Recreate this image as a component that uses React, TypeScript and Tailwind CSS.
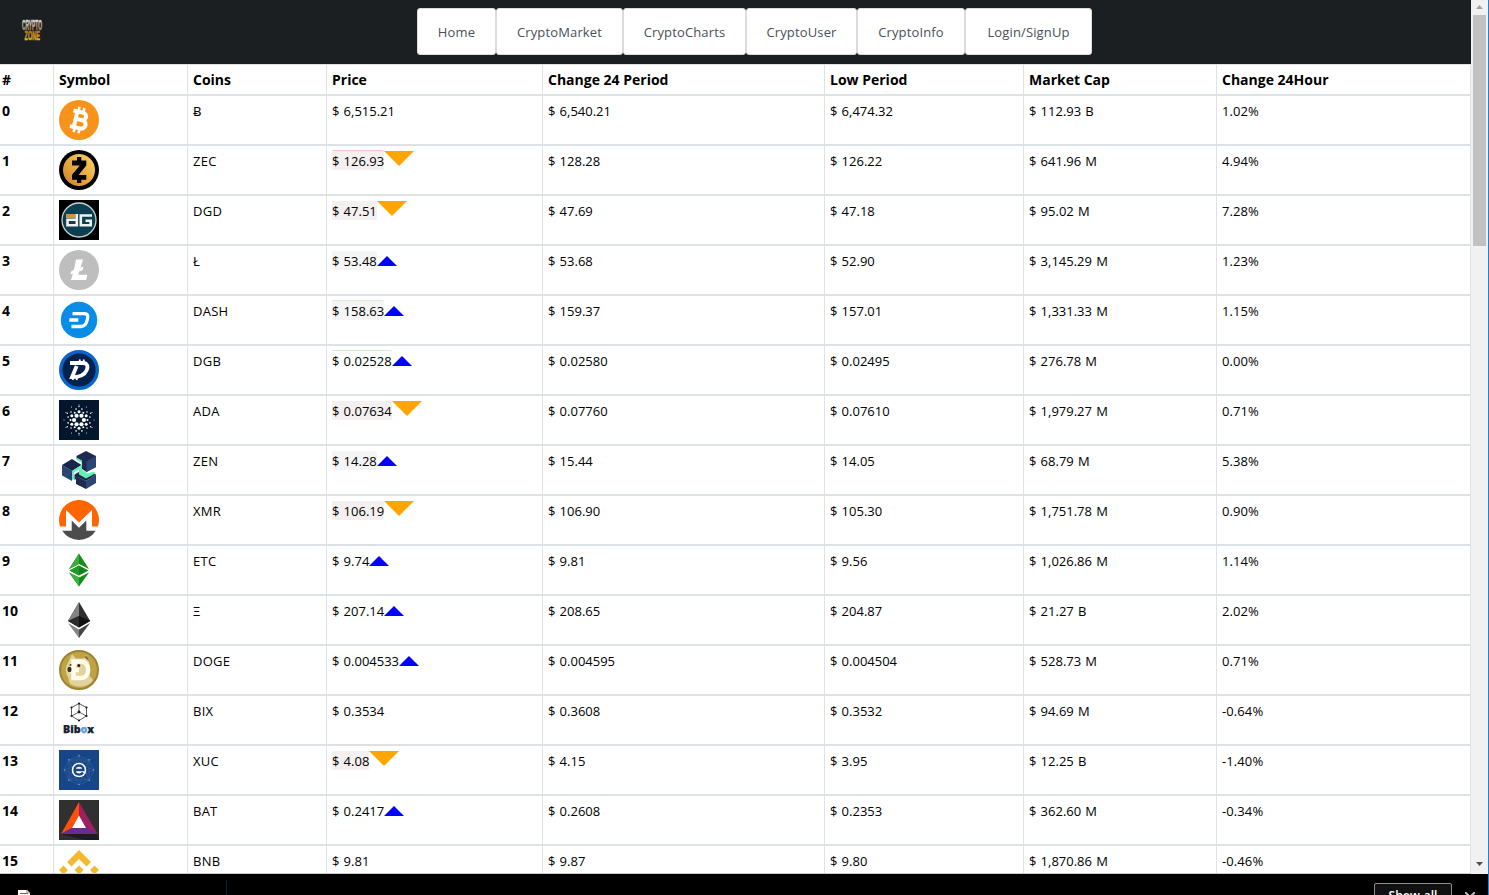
import React from 'react';

type Row = { coin: string; price: string; high: string; low: string; cap: string; change: string; dir?: 'up' | 'down'; tint?: string };

const rows: Row[] = [
  { coin: 'Ƀ', price: '$ 6,515.21', high: '$ 6,540.21', low: '$ 6,474.32', cap: '$ 112.93 B', change: '1.02%' },
  { coin: 'ZEC', price: '$ 126.93', high: '$ 128.28', low: '$ 126.22', cap: '$ 641.96 M', change: '4.94%', dir: 'down', tint: 'bg-[#f5f0f0] border-[#f5c6cb]' },
  { coin: 'DGD', price: '$ 47.51', high: '$ 47.69', low: '$ 47.18', cap: '$ 95.02 M', change: '7.28%', dir: 'down', tint: 'bg-[#f5f0f0] border-white' },
  { coin: 'Ł', price: '$ 53.48', high: '$ 53.68', low: '$ 52.90', cap: '$ 3,145.29 M', change: '1.23%', dir: 'up', tint: 'bg-[#f5f5f5] border-white' },
  { coin: 'DASH', price: '$ 158.63', high: '$ 159.37', low: '$ 157.01', cap: '$ 1,331.33 M', change: '1.15%', dir: 'up', tint: 'bg-[#f5f5f5] border-[#d8ead8]' },
  { coin: 'DGB', price: '$ 0.02528', high: '$ 0.02580', low: '$ 0.02495', cap: '$ 276.78 M', change: '0.00%', dir: 'up', tint: 'bg-[#fbfefb] border-[#d3e9d3]' },
  { coin: 'ADA', price: '$ 0.07634', high: '$ 0.07760', low: '$ 0.07610', cap: '$ 1,979.27 M', change: '0.71%', dir: 'down', tint: 'bg-[#f5f0f0] border-white' },
  { coin: 'ZEN', price: '$ 14.28', high: '$ 15.44', low: '$ 14.05', cap: '$ 68.79 M', change: '5.38%', dir: 'up', tint: 'bg-[#f5f5f5] border-white' },
  { coin: 'XMR', price: '$ 106.19', high: '$ 106.90', low: '$ 105.30', cap: '$ 1,751.78 M', change: '0.90%', dir: 'down', tint: 'bg-[#f5f0f0] border-white' },
  { coin: 'ETC', price: '$ 9.74', high: '$ 9.81', low: '$ 9.56', cap: '$ 1,026.86 M', change: '1.14%', dir: 'up', tint: 'bg-[#fbfefb] border-white' },
  { coin: 'Ξ', price: '$ 207.14', high: '$ 208.65', low: '$ 204.87', cap: '$ 21.27 B', change: '2.02%', dir: 'up', tint: 'bg-[#fbfefb] border-white' },
  { coin: 'DOGE', price: '$ 0.004533', high: '$ 0.004595', low: '$ 0.004504', cap: '$ 528.73 M', change: '0.71%', dir: 'up', tint: 'bg-[#fbfefb] border-white' },
  { coin: 'BIX', price: '$ 0.3534', high: '$ 0.3608', low: '$ 0.3532', cap: '$ 94.69 M', change: '-0.64%' },
  { coin: 'XUC', price: '$ 4.08', high: '$ 4.15', low: '$ 3.95', cap: '$ 12.25 B', change: '-1.40%', dir: 'down', tint: 'bg-[#f5f0f0] border-white' },
  { coin: 'BAT', price: '$ 0.2417', high: '$ 0.2608', low: '$ 0.2353', cap: '$ 362.60 M', change: '-0.34%', dir: 'up', tint: 'bg-[#fdfffd] border-white' },
  { coin: 'BNB', price: '$ 9.81', high: '$ 9.87', low: '$ 9.80', cap: '$ 1,870.86 M', change: '-0.46%' },
];

const ring = (n: number, r: number, s: number, off = 0) =>
  Array.from({ length: n }, (_, i) => {
    const a = ((i + off) * 2 * Math.PI) / n;
    return <circle key={`${r}-${i}`} cx={20 + r * Math.cos(a)} cy={20 + r * Math.sin(a)} r={s} />;
  });

const icons: React.ReactNode[] = [
  <>
    <circle cx="20" cy="20" r="20" fill="#f7931a" />
    <g transform="rotate(13 20 20)" fill="none" stroke="#fff">
      <path d="M12.500 12H22c5.600 0 5.600 7.500 0 7.500h-5M17 19.500h5.500c6.800 0 6.800 8.500 0 8.500h-10M16.500 12v16" strokeWidth="4" />
      <path d="M17.500 7v4M22.500 7v4M17.500 29v4M22.500 29v4" strokeWidth="2.600" />
    </g>
  </>,
  <>
    <defs><linearGradient id="zec" x1="0" y1="1" x2="1" y2="0"><stop offset="0" stopColor="#cf7f22" /><stop offset="1" stopColor="#ffd560" /></linearGradient></defs>
    <circle cx="20" cy="20" r="20" fill="#000" />
    <circle cx="20" cy="20" r="16" fill="url(#zec)" />
    <path d="M13 10.500h5V7h4.300v3.500h5v5L19.500 25h7.800v4.800h-5V33H18v-3.200h-5v-5l7.800-9.300H13z" fill="#000" />
  </>,
  <>
    <path d="M0 0h40v40H0z" fill="#000" />
    <circle cx="20" cy="20" r="17" fill="#0c4050" stroke="#c5d1d6" strokeWidth="1.300" />
    <path d="M7 14h9.500v4H7z" fill="#cd963b" />
    <path d="M17.800 14v11.300H8.500v-5.500h8M33 15.500H21.800v9.700h9.900v-4.500H26.500" fill="none" stroke="#eef2f3" strokeWidth="2.600" />
  </>,
  <>
    <circle cx="20" cy="20" r="20" fill="#bebebe" />
    <path d="M17 9.500h7l-2.500 8.200 3-1.200-1 3.700-3.300 1.300-.9 3.300h9l-1.200 5.200H12l1.800-6.400-2.500 1 1.100-3.700 2.500-1z" fill="#fff" />
  </>,
  <>
    <circle cx="20" cy="20" r="18.200" fill="#078de8" />
    <path d="M13.500 13.700h11.800c4.300 0 3.700 3.500 3 6-1 4.500-2.700 6.800-6.300 6.800h-9.500M10.300 20h9" fill="none" stroke="#fff" strokeWidth="3.300" />
  </>,
  <>
    <circle cx="20" cy="20" r="18.300" fill="#02214d" stroke="#0965ca" strokeWidth="3.400" />
    <path d="M11 13h12.500c5 0 6 3.500 4 7.500-2 4.500-6 6.700-14.500 6.700L17.700 16" fill="none" stroke="#fff" strokeWidth="3.800" />
    <path d="M21 9.500l-.7 3M25 9.500l-.7 3M14.700 27l-1 3M18.500 26l-1 4" stroke="#fff" strokeWidth="1.800" />
  </>,
  <>
    <path d="M0 0h40v40H0z" fill="#03162b" />
    <g fill="#fff">{ring(6, 4.900, 2.100)}{ring(6, 8.300, 1.500, 0.5)}{ring(6, 8.500, 1)}{ring(12, 11.300, 0.8, 0.5)}{ring(6, 13.500, 0.7, 0.5)}{ring(12, 15, 0.5)}</g>
  </>,
  <>
    <path d="M17.500 6L27 1l10 5v11l-9.500 5-4.500-3v-7.500l-5.500-3z" fill="#1e2a52" /><path d="M27.500 11.500L37 6v11l-9.500 5z" fill="#2b4675" />
    <path d="M3 15l10 6v10L3 25.500z" fill="#2b4675" /><path d="M3 15l10-6 9.500 6L13 21z" fill="#1a2449" /><path d="M15.500 24.500l7-4V26L17 29l-1.500 1z" fill="#1e2a52" />
    <path d="M17 26l10 5v8l-10-5z" fill="#1e2a52" /><path d="M37 24.500L27 31v8l10-6z" fill="#2b4675" /><path d="M17 26l5-2 5 3 7-4 3 1.500L27 31z" fill="#1a2449" />
    <path d="M17.500 7.500l5.500 3V20l6 3.500 5-2 3 1.500-10 5.500-7-4v-5l-5 3V29l-2 1.500V21l9.500-6v-2.500l-5-2.500z" fill="#64efb6" />
  </>,
  <>
    <path d="M1.100 26.500A20 20 0 1 1 38.900 26.500H33V10L20 22.500 7 10v16.500z" fill="#ff6600" />
    <path d="M3.200 30.800H12.700V20.500L20 27.800l7.300-7.300v10.300h9.500A20 20 0 0 1 3.200 30.800z" fill="#4c4c4c" />
  </>,
  <>
    <path d="M20 3.500L30 19l-10-5-10 5z" fill="#158c1b" /><path d="M20 3.500V14l-10 5z" fill="#37ad3d" />
    <path d="M20 15.500l9.500 5-9.500 5-9.500-5z" fill="#108315" /><path d="M20 15.500v10l-9.500-5z" fill="#219b26" />
    <path d="M10 22.500l10 5 10-5-10 14z" fill="#158c1b" /><path d="M10 22.500l10 5v9z" fill="#37b33e" />
  </>,
  <>
    <path d="M20 2l11.200 19L20 27.500 9 21z" fill="#303030" /><path d="M20 2v14L9 21z" fill="#858585" />
    <path d="M20 16l11.200 5L20 27.500z" fill="#111" /><path d="M20 16v11.500L9 21z" fill="#2d2d2d" />
    <path d="M9 23l11 6.500V38z" fill="#858585" /><path d="M31 23l-11 6.500V38z" fill="#444" />
  </>,
  <>
    <circle cx="20" cy="20" r="19" fill="#bea444" stroke="#9d8530" strokeWidth="2" />
    <path d="M9 13l4-9 4 4.500h7l4-3.500 3 11-1 9 4 5c-5 8-16 8-23 4l-2-7c-3-4-3-10 0-14z" fill="#e2d2a0" />
    <path d="M10 17l5-7 4 1-4 14-5-2z" fill="#f8efcf" /><path d="M25 7l3-1 2 5z" fill="#8a6737" />
    <path d="M14.500 11.500v16.500h7.500c9.500 0 9.500-16.500 0-16.500zM11.500 20H20" fill="none" stroke="#fffcec" strokeWidth="4.500" />
    <ellipse cx="10.500" cy="19.500" rx="2" ry="2.800" fill="#3b3422" /><circle cx="19.800" cy="15.500" r="1.500" fill="#242018" /><circle cx="11.500" cy="15" r="1" fill="#4b4128" />
  </>,
  <>
    <path d="M20 3.500l7.500 4v8.500L20 20.500 12.500 16V7.500zM20 12V3.500M20 12l7.500 4M20 12l-7.500 4" fill="none" stroke="#34373c" strokeWidth=".8" />
    <g fill="#17191d"><circle cx="20" cy="3.500" r="1.100" /><circle cx="27.500" cy="7.500" r="1.100" /><circle cx="27.500" cy="16" r="1.100" /><circle cx="20" cy="20.500" r="1.100" /><circle cx="12.500" cy="16" r="1.100" /><circle cx="12.500" cy="7.500" r="1.100" /><circle cx="20" cy="12" r="1.400" /></g>
    <text x="4" y="32.500" fontSize="10" fontWeight="800" textLength="31" lengthAdjust="spacingAndGlyphs" fill="#17202f" stroke="#17202f" strokeWidth=".25" fontFamily="Open Sans, sans-serif">Bib<tspan fill="#5f9bea" stroke="#5f9bea">o</tspan>x</text>
  </>,
  <>
    <path d="M0 0h40v40H0z" fill="#164588" />
    <g fill="none" stroke="#4168a0" strokeWidth=".5"><path d="M20 6l10 4 5 10-5 10-10 5-10-5-5-10 5-10zM20 6l10 24H10zM5 20l25-10v20zM35 20L10 10v20zM20 35l10-25H10z" /></g>
    <g fill="#7894bd">{ring(8, 14.500, 0.8)}</g>
    <circle cx="20" cy="20" r="7.300" fill="#fff" /><path d="M15.500 20h9c0-6-9-6-9 0 0 5.500 6.500 5.500 8.500 2.500" fill="none" stroke="#164588" strokeWidth="2.300" />
  </>,
  <>
    <path d="M0 0h40v40H0z" fill="#303030" /><path d="M1.500 34H38l2 4v2H26z" fill="#1d1d1d" />
    <path d="M20 2v14l-7 12L2 34z" fill="#ff4f09" /><path d="M20 2l18.500 32L27 28l-7-12z" fill="#9e1f63" /><path d="M2 34l11-6h14l11.500 6z" fill="#662d91" /><path d="M20 15.500l7 12.500H13z" fill="#fff" />
  </>,
  <g fill="#f3ba2f"><path d="M20 0l12 12-4.500 4.500L20 9l-7.500 7.500L8 12zM4.500 15.500L9 20l-4.500 4.500L0 20zM20 15.500l4.500 4.500-4.500 4.500-4.500-4.500zM35.500 15.500L40 20l-4.500 4.500L31 20zM8 28l4.500-4.500L20 31l7.500-7.500L32 28 20 40z" /></g>,
];

const cols = 'grid grid-cols-[54px_134px_139px_216px_282px_199px_193px_254px]';
const cell = 'border-r border-[#dee2e6] pl-[5px]';
const headers = ['#', 'Symbol', 'Coins', 'Price', 'Change 24 Period', 'Low Period', 'Market Cap', 'Change 24Hour'];
const nav: [string, string][] = [
  ['Home', 'w-[79px]'], ['CryptoMarket', 'w-[127px]'], ['CryptoCharts', 'w-[123px]'],
  ['CryptoUser', 'w-[111px]'], ['CryptoInfo', 'w-[108px]'], ['Login/SignUp', 'w-[127px]'],
];

function Logo() {
  return (
    <svg className="ml-[22px] h-[22px] w-5 overflow-visible" viewBox="0 0 20 22" fontFamily="Liberation Sans, sans-serif" fontWeight="700">
      <defs>
        <linearGradient id="lg" x1="0" y1="0" x2="0" y2="1"><stop offset="0.2" stopColor="#e8e3dc" /><stop offset="1" stopColor="#99733b" /></linearGradient>
        <linearGradient id="lz" x1="0" y1="0" x2="0" y2="1"><stop offset="0" stopColor="#a36d18" /><stop offset="1" stopColor="#f5bf28" /></linearGradient>
      </defs>
      <text x="0" y="10.500" fontSize="14" textLength="20" lengthAdjust="spacingAndGlyphs" fill="url(#lg)" stroke="url(#lg)" strokeWidth=".5">CRYPTO</text>
      <text x="2.500" y="21" fontSize="13" textLength="15.500" lengthAdjust="spacingAndGlyphs" fill="url(#lz)" stroke="url(#lz)" strokeWidth=".6">ZONE</text>
    </svg>
  );
}

function Arrow({ dir }: { dir: 'up' | 'down' }) {
  return dir === 'down' ? (
    <svg className="mt-[5px] h-[15px] w-[30px]" viewBox="0 0 30 15"><path d="M0 0h30L15 15z" fill="orange" /></svg>
  ) : (
    <svg className="mt-[10px] h-[10px] w-5" viewBox="0 0 20 10"><path d="M0 10h20L10 0z" fill="blue" /></svg>
  );
}

export default function App() {
  return (
    <div className="flex h-[895px] w-[1489px] flex-col overflow-hidden bg-white font-['Open_Sans','Noto_Sans',sans-serif] text-[13px] leading-5 text-black [word-spacing:0.8px]">
      <div className="flex h-[874px] shrink-0">
        <main className="h-[874px] w-[1471px] overflow-hidden border-b border-[#c8c9ca]">
          <header className="flex h-16 items-center bg-[#1c1f22]">
            <div className="w-[417px] shrink-0 pb-1"><Logo /></div>
            <nav className="flex pb-px">
              {nav.map(([name, width]) => (
                <a key={name} className={`${width} flex h-[47px] items-center justify-center rounded-[3px] border border-[#dcdcdc] bg-white tracking-[0.14px] text-[#495057]`}>{name}</a>
              ))}
            </nav>
          </header>
          <div className={`${cols} h-[30px] border-t border-[#dee2e6] text-[14px] font-bold [word-spacing:0px]`}>
            {headers.map((h, i) => <div key={h} className={`${i === 0 ? 'border-r border-[#dee2e6] pl-0.5' : cell} pt-[5px]`}>{h}</div>)}
          </div>
          {rows.map((r, i) => (
            <div key={r.coin} className={`${cols} h-[50px] border-t-2 border-[#dee2e6]`}>
              <div className="border-r border-[#dee2e6] pl-0.5 pt-[5px] text-[14px] font-bold">{i}</div>
              <div className={`${cell} pt-1`}><svg className="h-10 w-10" viewBox="0 0 40 40">{icons[i]}</svg></div>
              <div className={`${cell} pt-[5px] tracking-[0.25px]`}>{r.coin}</div>
              <div className={`${cell} flex items-start`}>
                {r.dir ? <><span className={`mt-1 h-5 rounded-[2px] border-t ${r.tint}`}>{r.price}</span><Arrow dir={r.dir} /></> : <span className="mt-[5px]">{r.price}</span>}
              </div>
              <div className={`${cell} pt-[5px]`}>{r.high}</div>
              <div className={`${cell} pt-[5px]`}>{r.low}</div>
              <div className={`${cell} pt-[5px]`}>{r.cap}</div>
              <div className={`${cell} pt-[5px] tracking-[0.1px]`}>{r.change}</div>
            </div>
          ))}
        </main>
        <aside className="flex w-[18px] flex-col items-center border-r border-[#1883d7] bg-[#f1f1f1]">
          <svg className="mt-[5px] h-1 w-[7px]" viewBox="0 0 7 4"><path d="M0 4h7L3.500 0z" fill="#a3a3a3" /></svg>
          <div className="mt-1.5 h-[231px] w-[13px] bg-[#c1c1c1]" />
          <svg className="mb-2 mt-auto h-1 w-[7px]" viewBox="0 0 7 4"><path d="M0 0h7L3.500 4z" fill="#505050" /></svg>
        </aside>
      </div>
      <footer className="flex h-[21px] shrink-0 overflow-hidden border-r border-[#1883d7] bg-black">
        <svg className="ml-[18px] mt-4 h-5 w-3" viewBox="0 0 12 20"><path d="M0 0h9l3 3v17H0z" fill="#fff" /><path d="M2 3.500h8" stroke="#1979ca" /><path d="M9 0v3h3" fill="none" stroke="#999" /></svg>
        <div className="ml-[196px] mt-1.5 h-[15px] w-px bg-[#06213c]" />
        <div className="ml-auto mt-[9px] h-6 w-[78px] rounded-[2px] border border-[#8c8c8c] bg-[#111] pt-[3px] text-center text-[12px] font-semibold leading-[18px] text-white">Show all</div>
        <svg className="ml-[13px] mr-[13px] mt-[18px] h-2.5 w-2.5" viewBox="0 0 10 10"><path d="M0 0l10 10M10 0L0 10" stroke="#bbb" strokeWidth="2" /></svg>
      </footer>
    </div>
  );
}
